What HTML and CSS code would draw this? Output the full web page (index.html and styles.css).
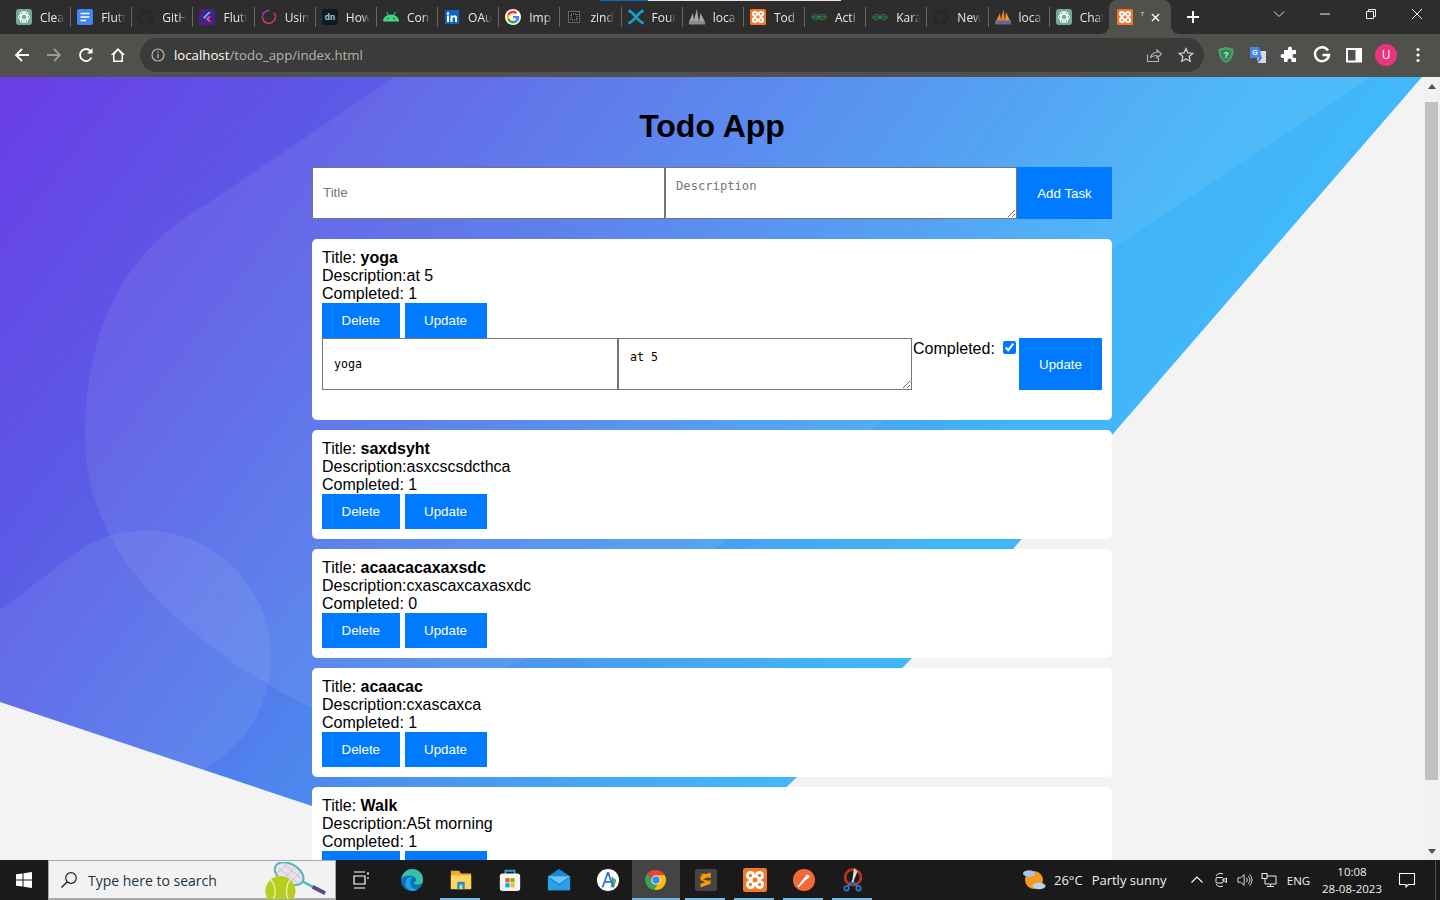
FILE: index.html
```html
<!DOCTYPE html>
<html lang="en">
<head>
<meta charset="utf-8">
<title>Todo App</title>
<link rel="stylesheet" href="styles.css">
</head>
<body>
<svg class="defs" width="0" height="0" aria-hidden="true">
  <symbol id="i-gpt" viewBox="0 0 16 16"><rect width="16" height="16" rx="3" fill="#74aa9c"/><g fill="none" stroke="#fff" stroke-width="1"><ellipse cx="8" cy="8" rx="5.6" ry="2.8"/><ellipse cx="8" cy="8" rx="5.6" ry="2.8" transform="rotate(60 8 8)"/><ellipse cx="8" cy="8" rx="5.6" ry="2.8" transform="rotate(120 8 8)"/></g></symbol>
  <symbol id="i-docs" viewBox="0 0 16 16"><rect width="16" height="16" rx="2" fill="#4285f4"/><path d="M3.5 4.5h9M3.5 8h9M3.5 11.500h5.500" stroke="#fff" stroke-width="1.500"/></symbol>
  <symbol id="i-gh" viewBox="0 0 16 16"><path fill="#24292e" d="M8 0C3.580 0 0 3.580 0 8c0 3.540 2.290 6.530 5.470 7.590.4.070.55-.17.55-.38 0-.19-.01-.82-.01-1.490-2.010.37-2.530-.49-2.690-.94-.09-.23-.48-.94-.82-1.130-.28-.15-.68-.52-.01-.53.63-.01 1.080.58 1.230.82.72 1.210 1.870.87 2.330.66.07-.52.28-.87.51-1.070-1.780-.2-3.640-.89-3.640-3.950 0-.87.31-1.590.82-2.150-.08-.2-.36-1.020.08-2.120 0 0 .67-.21 2.200.82.64-.18 1.320-.27 2-.27.68 0 1.360.09 2 .27 1.530-1.040 2.200-.82 2.200-.82.44 1.100.16 1.920.08 2.120.51.56.82 1.270.82 2.150 0 3.070-1.870 3.750-3.650 3.950.29.25.54.73.54 1.480 0 1.070-.01 1.930-.01 2.200 0 .21.15.46.55.38A8.013 8.013 0 0016 8c0-4.420-3.580-8-8-8z"/></symbol>
  <symbol id="i-flutter" viewBox="0 0 16 16"><rect width="16" height="16" rx="3" fill="#4a1f86"/><path d="M4 8.500 9.500 3H12L5.300 9.800z" fill="#4fd0e6"/><path d="M7 9.800 9.500 7.500H12L9.400 10.100 12 12.800H9.500z" fill="#f0559a"/></symbol>
  <symbol id="i-ring" viewBox="0 0 16 16"><path d="M12.900 3.700A6.500 6.500 0 1 1 1.600 9.500" fill="none" stroke="#e0365f" stroke-width="1.500"/><path d="M1.600 9.500A6.500 6.500 0 0 1 8.500 1.500" fill="none" stroke="#a13cb8" stroke-width="1.500"/></symbol>
  <symbol id="i-dn" viewBox="0 0 16 16"><rect width="16" height="16" rx="2" fill="#0e1a22"/><text x="8" y="11" text-anchor="middle" font-family="Liberation Sans" font-weight="700" font-size="8.500" fill="#a5d3ea">dn</text></symbol>
  <symbol id="i-android" viewBox="0 0 16 16"><path d="M0 12.500a8 7 0 0 1 16 0z" fill="#3ddc84"/><path d="M3.500 3 5.200 6M12.500 3l-1.700 3" stroke="#3ddc84" stroke-width="1"/><circle cx="5" cy="9.500" r=".8" fill="#2e2e2e"/><circle cx="11" cy="9.500" r=".8" fill="#2e2e2e"/></symbol>
  <symbol id="i-in" viewBox="0 0 16 16"><rect x="1" y="1" width="14" height="14" fill="#0a66c2"/><rect x="3" y="6.500" width="2" height="6.500" fill="#fff"/><circle cx="4" cy="4.500" r="1.200" fill="#fff"/><path d="M6.500 6.500h2v1c.5-.8 1.300-1.200 2.200-1.200 1.700 0 2.300 1.100 2.300 2.900V13h-2V9.700c0-.9-.3-1.500-1.100-1.500-.9 0-1.400.6-1.400 1.600V13h-2z" fill="#fff"/></symbol>
  <symbol id="i-g" viewBox="-6 -6 60 60"><circle cx="24" cy="24" r="30" fill="#fff"/><path fill="#EA4335" d="M24 9.500c3.540 0 6.710 1.220 9.210 3.600l6.850-6.850C35.900 2.380 30.470 0 24 0 14.620 0 6.510 5.380 2.560 13.220l7.980 6.190C12.430 13.720 17.740 9.500 24 9.500z"/><path fill="#4285F4" d="M46.980 24.550c0-1.570-.15-3.090-.38-4.550H24v9.020h12.940c-.58 2.960-2.260 5.480-4.780 7.180l7.730 6c4.510-4.180 7.090-10.360 7.090-17.650z"/><path fill="#FBBC05" d="M10.530 28.590c-.48-1.450-.76-2.990-.76-4.590s.27-3.140.76-4.590l-7.980-6.190C.92 16.460 0 20.120 0 24c0 3.880.92 7.540 2.560 10.780l7.970-6.190z"/><path fill="#34A853" d="M24 48c6.480 0 11.930-2.130 15.890-5.810l-7.730-6c-2.150 1.450-4.920 2.300-8.160 2.300-6.260 0-11.570-4.220-13.470-9.910l-7.980 6.190C6.510 42.620 14.620 48 24 48z"/></symbol>
  <symbol id="i-zind" viewBox="0 0 16 16"><rect x="2.500" y="2.500" width="11" height="11" fill="#222" stroke="#aaa" stroke-dasharray="1 1"/><rect x="5" y="5" width="6" height="6" fill="none" stroke="#aaa" stroke-dasharray="1 1"/></symbol>
  <symbol id="i-found" viewBox="0 0 16 16"><path d="M.5 1.500C4 3 6 5.500 8 8s4 5 7.500 6.500M15.500 1.500C12 3 10 5.500 8 8s-4 5-7.500 6.500" fill="none" stroke="#17a3c8" stroke-width="2.800"/></symbol>
  <symbol id="i-pma" viewBox="0 0 16 16"><path d="M0 13 4 4l1 9zM4.500 13 7.800 0 10 13zM10 13l1.500-9L16 13z" fill="#a8a8a8"/><rect y="12" width="16" height="3.500" fill="#8a8a8a"/></symbol>
  <symbol id="i-pma2" viewBox="0 0 16 16"><path d="M1 12 5 4l1 8zM5.500 12 8.500 0 10 12z" fill="#e8842c"/><path d="M10 12l1-9 4 9z" fill="#f09a3e"/><rect y="11.500" width="16" height="4" fill="#5c6a9a"/></symbol>
  <symbol id="i-xampp" viewBox="0 0 16 16"><rect width="16" height="16" rx="1.500" fill="#f6772a"/><g fill="#fff"><circle cx="5" cy="5" r="3"/><circle cx="11" cy="5" r="3"/><circle cx="5" cy="11" r="3"/><circle cx="11" cy="11" r="3"/><rect x="4.500" y="4.500" width="7" height="7"/></g><g fill="#f6772a"><circle cx="5" cy="5" r="1.100"/><circle cx="11" cy="5" r="1.100"/><circle cx="5" cy="11" r="1.100"/><circle cx="11" cy="11" r="1.100"/><rect x="6.500" y="6.500" width="3" height="3"/></g></symbol>
  <symbol id="i-gfg" viewBox="0 0 16 16"><g fill="none" stroke="#2f8d46" stroke-width="1"><path d="M.8 8h14.400"/><path d="M7.600 8c0-1.600-1.300-2.500-3-2.500S1 6.500 1 8s1.400 2.500 3.600 2.500 3-.9 3-2.500zM8.400 8c0-1.600 1.300-2.500 3-2.500S15 6.500 15 8s-1.400 2.500-3.600 2.500-3-.9-3-2.500z"/></g></symbol>
</svg>

<header class="tabstrip">
  <div class="tab"><svg class="ico16"><use href="#i-gpt"/></svg><span class="tab-txt">Clea</span></div>
  <div class="tab"><svg class="ico16"><use href="#i-docs"/></svg><span class="tab-txt">Flutt</span></div>
  <div class="tab"><svg class="ico16"><use href="#i-gh"/></svg><span class="tab-txt">GitH</span></div>
  <div class="tab"><svg class="ico16"><use href="#i-flutter"/></svg><span class="tab-txt">Flutt</span></div>
  <div class="tab"><svg class="ico16"><use href="#i-ring"/></svg><span class="tab-txt">Usin</span></div>
  <div class="tab"><svg class="ico16"><use href="#i-dn"/></svg><span class="tab-txt">How</span></div>
  <div class="tab"><svg class="ico16"><use href="#i-android"/></svg><span class="tab-txt">Con</span></div>
  <div class="tab"><svg class="ico16"><use href="#i-in"/></svg><span class="tab-txt">OAu</span></div>
  <div class="tab"><svg class="ico16"><use href="#i-g"/></svg><span class="tab-txt">Imp</span></div>
  <div class="tab"><svg class="ico16"><use href="#i-zind"/></svg><span class="tab-txt">zind</span></div>
  <div class="tab"><svg class="ico16"><use href="#i-found"/></svg><span class="tab-txt">Four</span></div>
  <div class="tab"><svg class="ico16"><use href="#i-pma"/></svg><span class="tab-txt">loca</span></div>
  <div class="tab"><svg class="ico16"><use href="#i-xampp"/></svg><span class="tab-txt">Tod</span></div>
  <div class="tab"><svg class="ico16"><use href="#i-gfg"/></svg><span class="tab-txt">Acti</span></div>
  <div class="tab"><svg class="ico16"><use href="#i-gfg"/></svg><span class="tab-txt">Kara</span></div>
  <div class="tab"><svg class="ico16"><use href="#i-gh"/></svg><span class="tab-txt">New</span></div>
  <div class="tab"><svg class="ico16"><use href="#i-pma2"/></svg><span class="tab-txt">loca</span></div>
  <div class="tab tab-nosep"><svg class="ico16"><use href="#i-gpt"/></svg><span class="tab-txt">Chat</span></div>
  <div class="tab tab-active"><svg class="ico16"><use href="#i-xampp"/></svg><span class="tab-txt-a">T</span>
    <svg class="tab-x" viewBox="0 0 10 10"><path d="M1 1l8 8M9 1l-8 8" stroke="#fff" stroke-width="1.500"/></svg></div>
  <div class="newtab"><svg class="ico12" viewBox="0 0 12 12"><path d="M6 0v12M0 6h12" stroke="#fff" stroke-width="2"/></svg></div>
  <div class="winctl">
    <div class="winbtn"><svg class="ico12" viewBox="0 0 12 12"><path d="M1 3.500l5 5 5-5" fill="none" stroke="#ddd"/></svg></div>
    <div class="winbtn"><svg class="ico12" viewBox="0 0 12 12"><path d="M1 6h10" stroke="#eee"/></svg></div>
    <div class="winbtn"><svg class="ico12" viewBox="0 0 12 12"><path d="M1.500 3.500h7v7h-7zM3.500 3.500v-2h7v7h-2" fill="none" stroke="#eee"/></svg></div>
    <div class="winbtn"><svg class="ico12" viewBox="0 0 12 12"><path d="M1 1l10 10M11 1L1 11" stroke="#eee"/></svg></div>
  </div>
</header>
<div class="loadline"><span class="load-blue"></span><span class="load-white"></span></div>

<nav class="toolbar">
  <div class="tbtn"><svg class="ico16" viewBox="0 0 16 16"><path d="M15 8H2M8 2 2 8l6 6" fill="none" stroke="#fff" stroke-width="1.800"/></svg></div>
  <div class="tbtn"><svg class="ico16" viewBox="0 0 16 16"><path d="M1 8h13M8 2l6 6-6 6" fill="none" stroke="#999" stroke-width="1.800"/></svg></div>
  <div class="tbtn"><svg class="ico16" viewBox="0 0 16 16"><path d="M13.500 10.500A6 6 0 1 1 12.500 4" fill="none" stroke="#fff" stroke-width="1.800"/><path d="M14.500 1v5.500H9z" fill="#fff"/></svg></div>
  <div class="tbtn"><svg class="ico16" viewBox="0 0 16 16"><path d="M8 1 .8 8H3v7h10V8h2.200zM4.500 7.500 8 3.500l3.500 4v6h-7z" fill="#fff" fill-rule="evenodd"/></svg></div>
  <div class="omnibox">
    <svg class="ico14" viewBox="0 0 14 14"><circle cx="7" cy="7" r="6" fill="none" stroke="#b5b5b5" stroke-width="1.200"/><path d="M7 6v4.200M7 3.600v1.300" stroke="#b5b5b5" stroke-width="1.300"/></svg>
    <span class="url"><span class="url-host">localhost</span>/todo_app/index.html</span>
    <svg class="ico16" viewBox="0 0 16 16"><path d="M1.500 7.500v7h11V11M4.500 11c.5-3.500 3-5.500 6.500-5.500V3l4.500 4-4.500 4V8.500c-2.500 0-5 .5-6.500 2.500z" fill="none" stroke="#b5b5b5" stroke-width="1.100"/></svg>
    <svg class="ico16 omni-star" viewBox="0 0 16 16"><path d="M8 1.500l2 4.400 4.800.5-3.600 3.200 1 4.700L8 12l-4.200 2.300 1-4.700L1.200 6.400 6 5.900z" fill="none" stroke="#d0d0d0" stroke-width="1.300"/></svg>
  </div>
  <div class="tbtn"><svg class="ico16" viewBox="0 0 16 16"><path d="M8 0 15.500 2c0 6-1.500 11-7.500 14C2 13 .5 8 .5 2z" fill="#4fa868"/><path d="M8 2 13.500 3.500c0 5-1.300 8.500-5.500 11-4.200-2.500-5.500-6-5.500-11z" fill="#2e8b57"/><text x="8" y="11" text-anchor="middle" font-family="Liberation Sans" font-size="8.500" font-weight="700" fill="#d8f0e0">?</text></svg></div>
  <div class="tbtn"><svg class="ico16" viewBox="0 0 16 16"><path d="M6 4h10v12H8z" fill="#d5dbe5"/><path d="M0 0h9l3 11H0z" fill="#4a86e8"/><text x="5" y="8" text-anchor="middle" font-family="Liberation Sans" font-size="7" font-weight="700" fill="#fff">G</text><path d="M9 11l-1 5 4-5z" fill="#3568b8"/></svg></div>
  <div class="tbtn"><svg class="ico16" viewBox="0 0 16 16"><path d="M6 1.500a2 2 0 0 1 4 0V3h4v4h-1.500a2 2 0 0 0 0 4H14v4H9.500v-1.500a2 2 0 0 0-4 0V15H2v-4H.5a2 2 0 0 1 0-4H2V3h4z" fill="#fff"/></svg></div>
  <div class="tbtn"><svg class="ico16" viewBox="0 0 16 16"><path d="M14 3.500A7 7 0 1 0 15 8H8.500" fill="none" stroke="#fff" stroke-width="2.400"/></svg></div>
  <div class="tbtn"><svg class="ico16" viewBox="0 0 16 16"><rect x="1" y="2" width="14" height="12.500" fill="none" stroke="#fff" stroke-width="2"/><rect x="9.500" y="2" width="5.500" height="12.500" fill="#fff"/></svg></div>
  <div class="tbtn"><span class="avatar">U</span></div>
  <div class="tbtn"><svg class="ico16" viewBox="0 0 16 16"><circle cx="8" cy="2.500" r="1.600" fill="#fff"/><circle cx="8" cy="8" r="1.600" fill="#fff"/><circle cx="8" cy="13.500" r="1.600" fill="#fff"/></svg></div>
</nav>

<div class="viewport">
  <main class="page">
    <svg class="page-bg" viewBox="0 0 1424 783" aria-hidden="true">
      <defs>
        <linearGradient id="bgrad" gradientUnits="userSpaceOnUse" x1="0" y1="0" x2="1067" y2="800">
          <stop offset="0" stop-color="#6b3de6"/>
          <stop offset=".22" stop-color="#5b5ae6"/>
          <stop offset=".5" stop-color="#4e88ee"/>
          <stop offset=".76" stop-color="#41b5f8"/>
          <stop offset="1" stop-color="#40bdfa"/>
        </linearGradient>
        <clipPath id="bclip"><path d="M0 0H1422L1112 358 1013 472 912 581 797 700 700 793 312 729 0 625z"/></clipPath>
      </defs>
      <path d="M0 0H1422L1112 358 1013 472 912 581 797 700 700 793 312 729 0 625z" fill="url(#bgrad)"/>
      <g clip-path="url(#bclip)" fill="#fff" fill-opacity=".07">
        <path d="M395 0 205 128C130 170 85 245 85 360c0 60 25 115 75 165 50 50 100 80 150 105 130 0 280-60 420-170L1112 172 1370 0z"/>
        <path d="M0 533 85 469A126 126 0 1 1 205 691V800H0z"/>
      </g>
    </svg>
    <div class="container">
      <h1 class="app-title">Todo App</h1>
      <form class="add-form">
        <input class="field field-text" type="text" placeholder="Title">
        <textarea class="field field-area" placeholder="Description"></textarea>
        <button class="btn btn-add" type="button">Add Task</button>
      </form>

      <article class="card">
        <div class="line">Title: <b>yoga</b></div>
        <div class="line">Description:at 5</div>
        <div class="line">Completed: 1</div>
        <div class="actions"><button class="btn" type="button">Delete</button><button class="btn" type="button">Update</button></div>
        <form class="edit-form">
          <input class="field edit-text" type="text" value="yoga">
          <textarea class="field edit-area">at 5</textarea>
          <label class="edit-label">Completed:</label>
          <input class="edit-check" type="checkbox" checked>
          <button class="btn btn-edit" type="button">Update</button>
        </form>
      </article>

      <article class="card">
        <div class="line">Title: <b>saxdsyht</b></div>
        <div class="line">Description:asxcscsdcthca</div>
        <div class="line">Completed: 1</div>
        <div class="actions"><button class="btn" type="button">Delete</button><button class="btn" type="button">Update</button></div>
      </article>

      <article class="card">
        <div class="line">Title: <b>acaacacaxaxsdc</b></div>
        <div class="line">Description:cxascaxcaxasxdc</div>
        <div class="line">Completed: 0</div>
        <div class="actions"><button class="btn" type="button">Delete</button><button class="btn" type="button">Update</button></div>
      </article>

      <article class="card">
        <div class="line">Title: <b>acaacac</b></div>
        <div class="line">Description:cxascaxca</div>
        <div class="line">Completed: 1</div>
        <div class="actions"><button class="btn" type="button">Delete</button><button class="btn" type="button">Update</button></div>
      </article>

      <article class="card">
        <div class="line">Title: <b>Walk</b></div>
        <div class="line">Description:A5t morning</div>
        <div class="line">Completed: 1</div>
        <div class="actions"><button class="btn" type="button">Delete</button><button class="btn" type="button">Update</button></div>
      </article>
    </div>
  </main>
  <aside class="scrollbar">
    <div class="sb-up"><svg class="sb-arrow" viewBox="0 0 8 5"><path d="M4 0l4 5H0z" fill="#505050"/></svg></div>
    <div class="sb-thumb"></div>
    <div class="sb-down"><svg class="sb-arrow" viewBox="0 0 8 5"><path d="M0 0h8L4 5z" fill="#505050"/></svg></div>
  </aside>
</div>

<footer class="taskbar">
  <div class="startbtn"><svg class="ico16" viewBox="0 0 16 16"><path d="M0 2.300 6.500 1.400V7.500H0zM7.500 1.300 16 0v7.500H7.500zM0 8.500h6.500v6.100L0 13.700zM7.500 8.500H16V16L7.500 14.700z" fill="#fff"/></svg></div>
  <div class="searchbox">
    <svg class="ico18" viewBox="0 0 18 18"><circle cx="11" cy="7" r="5.300" fill="none" stroke="#222" stroke-width="1.200"/><path d="M7 11 1.500 16.500" stroke="#222" stroke-width="1.400"/></svg>
    <span class="search-txt">Type here to search</span>
    <svg class="doodle" viewBox="0 0 66 38">
      <ellipse cx="27" cy="12" rx="16" ry="10" transform="rotate(30 27 12)" fill="#e9e2ee" stroke="#4cb8b8" stroke-width="2"/>
      <path d="M16 6 36 22M22 3 41 18M14 14l18 12M18 22 34 4M26 24 40 8M12 14 26 1" stroke="#b9b0c8" stroke-width=".7"/>
      <path d="M41 20 52 26" stroke="#4cb8b8" stroke-width="2.500"/>
      <path d="M51 25.500 64 32" stroke="#5a4a86" stroke-width="4"/>
      <circle cx="18" cy="30" r="15.500" fill="#b6cf1f"/>
      <path d="M8 18c6 7 6 17 1 24M28 18c-5 7-5 17 0 24" fill="none" stroke="#eef2b8" stroke-width="1.300"/>
    </svg>
  </div>
  <div class="tasks">
    <div class="task task-view"><svg class="ico18" viewBox="0 0 18 18"><path d="M2 1h11M2 17h11M2 5h11v8H2z M16 1v3M16 6v2" fill="none" stroke="#fff" stroke-width="1.200"/></svg></div>
    <div class="task"><svg class="ico24" viewBox="0 0 26 26"><circle cx="13" cy="13" r="12" fill="#0f6fb8"/><path d="M1.500 12C3 5 8 1 13 1c7 0 12 5 12 12 0 3-2.500 5-6 5-3 0-4-1-4-2.500 3-.5 3.500-4.500 0-6C10 7 4 8 1.500 12z" fill="#35c2a6"/><path d="M6 17c0-5 4-8 8-7-2 1-3 3-3 6 0 4 3 7 8 7-6 4-13 0-13-6z" fill="#1fa6e0"/></svg></div>
    <div class="task task-open"><svg class="ico24" viewBox="0 0 26 26"><path d="M2 3h9l2 3h11v16H2z" fill="#e6ad2e"/><path d="M2 8h22v15H2z" fill="#fcd462"/><rect x="9" y="15" width="8" height="8" fill="#1f8fd8"/><rect x="11.500" y="18" width="3" height="5" fill="#fcd462"/></svg></div>
    <div class="task"><svg class="ico24" viewBox="0 0 26 26"><path d="M8 7V3h10v4" fill="none" stroke="#29a3d8" stroke-width="2"/><rect x="2" y="6" width="22" height="19" rx="3" fill="#f4f4f4"/><rect x="8" y="11" width="4.500" height="4.500" fill="#f25022"/><rect x="13.500" y="11" width="4.500" height="4.500" fill="#7fba00"/><rect x="8" y="16.500" width="4.500" height="4.500" fill="#00a4ef"/><rect x="13.500" y="16.500" width="4.500" height="4.500" fill="#ffb900"/></svg></div>
    <div class="task"><svg class="ico24" viewBox="0 0 26 26"><path d="M1 9 13 1l12 8v15H1z" fill="#1c86d0"/><path d="M1 9h24L13 17z" fill="#6cc4f4"/><path d="M1 24V10l12 9 12-9v14z" fill="#2aa0e8"/></svg></div>
    <div class="task"><svg class="ico24" viewBox="0 0 26 26"><circle cx="13" cy="13" r="12" fill="#fff"/><path d="M17 9l5 4-2 7-4 1z" fill="#4caf6a"/><path d="M13 5 7 21M13 5l6 16M9 15h8" fill="none" stroke="#2f6fe0" stroke-width="1.800"/><circle cx="13" cy="6" r="1.800" fill="#2f6fe0"/></svg></div>
    <div class="task task-active"><svg class="ico24" viewBox="0 0 48 48"><path fill="#EA4335" d="M24 4a20 20 0 0 1 17.320 10H24a10 10 0 0 0-9.500 6.900L7.500 10.500A20 20 0 0 1 24 4z"/><path fill="#34A853" d="M7.500 10.500 16 25.500a10 10 0 0 0 11 8L20.500 43.700A20 20 0 0 1 7.500 10.500z"/><path fill="#FBBC05" d="M41.320 14A20 20 0 0 1 20.500 43.700L29 29a10 10 0 0 0 1-9 10 10 0 0 0-2-6z"/><circle cx="24" cy="24" r="9.500" fill="#fff"/><circle cx="24" cy="24" r="7.500" fill="#4285F4"/></svg></div>
    <div class="task task-open"><svg class="ico24" viewBox="0 0 26 26"><rect x="1" y="1" width="24" height="24" rx="3" fill="#454545"/><path d="M18 5v4L7 13V9zM18 13v4L7 21v-4zM7 11l11 4-4 1-7-3zM18 11 7 7l4-1 7 3z" fill="#ff9800"/></svg></div>
    <div class="task task-open"><svg class="ico24" viewBox="0 0 16 16"><use href="#i-xampp"/></svg></div>
    <div class="task task-open"><svg class="ico24" viewBox="0 0 26 26"><circle cx="13" cy="13" r="12" fill="#f4693a"/><path d="M6 20l7-9 3-4 3 1 0 2-4 3-8 8z" fill="#fff"/></svg></div>
    <div class="task task-open"><svg class="ico24" viewBox="0 0 26 26"><circle cx="13" cy="10" r="8.500" fill="none" stroke="#b5341a" stroke-width="3"/><path d="M15 1 13 15M17 3 12 16" stroke="#ddd" stroke-width="2"/><path d="M12 15 7 20M13 15l5 5" stroke="#1f7fd0" stroke-width="2"/><circle cx="6" cy="22" r="2.500" fill="none" stroke="#1f7fd0" stroke-width="1.800"/><circle cx="19" cy="22" r="2.500" fill="none" stroke="#1f7fd0" stroke-width="1.800"/></svg></div>
  </div>
  <div class="tray">
    <svg class="weather" viewBox="0 0 24 24"><circle cx="12" cy="12" r="9" fill="#f49a1c"/><ellipse cx="7" cy="5.500" rx="6" ry="3.200" fill="#a8c8e8"/><ellipse cx="17" cy="18" rx="6.500" ry="3.200" fill="#b8d4ec"/></svg>
    <span class="weather-txt"><span class="temp">26°C</span>Partly sunny</span>
    <div class="tray-ico tray-first"><svg class="ico12" viewBox="0 0 12 12"><path d="M.5 8.500 6 3l5.500 5.500" fill="none" stroke="#fff" stroke-width="1.100"/></svg></div>
    <div class="tray-ico"><svg class="ico16" viewBox="0 0 16 16"><path d="M3 4a5 5 0 0 1 7-2M3 12a5 5 0 0 0 7 2" fill="none" stroke="#eee"/><rect x="3" y="5.500" width="7" height="5.500" rx="1" fill="none" stroke="#eee"/><path d="M10 8l3.500-2v4.500z" fill="none" stroke="#eee"/></svg></div>
    <div class="tray-ico"><svg class="ico16" viewBox="0 0 18 16"><path d="M1 5.500h3L8 2v12l-4-3.500H1z" fill="none" stroke="#eee"/><path d="M10.500 5.500a3.500 3.500 0 0 1 0 5M12.500 3.500a6 6 0 0 1 0 9M14.500 2a8.500 8.500 0 0 1 0 12" fill="none" stroke="#eee"/></svg></div>
    <div class="tray-ico"><svg class="ico16" viewBox="0 0 16 16"><path d="M4 4h11v8H4zM9.500 12v2.500M6 14.500h7" fill="none" stroke="#eee"/><rect x="1" y="1.500" width="5" height="5" fill="#1a1a1a" stroke="#eee"/></svg></div>
    <span class="lang">ENG</span>
    <div class="clock"><span>10:08</span><span>28-08-2023</span></div>
    <div class="notify"><svg class="ico16" viewBox="0 0 16 16"><path d="M.5 1.500h15v11H9.500L7 15v-2.500H.5z" fill="none" stroke="#fff" stroke-width="1.100"/></svg></div>
    <span class="show-desk"></span>
  </div>
</footer>
</body>
</html>
```

FILE: styles.css
```css
* { box-sizing: border-box; }
html, body { margin: 0; height: 100%; }
body {
  display: flex;
  flex-direction: column;
  height: 900px;
  overflow: hidden;
  font-family: "Liberation Sans", Arial, sans-serif;
  position: relative;
}
.defs { position: absolute; }
svg { display: block; flex: none; overflow: visible; }
.ico12 { width: 12px; height: 12px; }
.ico14 { width: 14px; height: 14px; }
.ico16 { width: 16px; height: 16px; }
.ico18 { width: 18px; height: 18px; }
.ico24 { width: 24px; height: 24px; }

/* tab strip */
.tabstrip {
  flex: none;
  height: 34px;
  display: flex;
  background: #2d2d2d;
  padding-left: 8px;
  color: #e9e9e9;
  font: 12px "Open Sans", sans-serif;
}
.tab {
  flex: none;
  width: 61.17px;
  display: flex;
  align-items: center;
  gap: 8px;
  padding-left: 8px;
  position: relative;
}
.tab::after {
  content: "";
  position: absolute;
  right: -2px;
  top: 7px;
  height: 20px;
  width: 1px;
  background: #686868;
}
.tab-nosep::after { display: none; }
.tab-txt {
  flex: none;
  width: 24px;
  white-space: nowrap;
  -webkit-mask-image: linear-gradient(90deg, #000 65%, transparent);
  mask-image: linear-gradient(90deg, #000 65%, transparent);
}
.tab-active {
  background: #50514d;
  border-radius: 8px 8px 0 0;
  width: 62px;
}
.tab-active::before,
.tab-active::after {
  content: "";
  display: block;
  position: absolute;
  top: auto;
  bottom: 0;
  width: 8px;
  height: 8px;
}
.tab-active::before {
  left: -8px;
  background: radial-gradient(circle at 0 0, transparent 7.5px, #50514d 8px);
}
.tab-active::after {
  right: -8px;
  background: radial-gradient(circle at 100% 0, transparent 7.5px, #50514d 8px);
}
.tab-txt-a { width: 6px; font-size: 6px; height: 14px; }
.tab-x { width: 9px; height: 9px; margin-left: -4px; }
.newtab {
  flex: none;
  width: 44px;
  display: flex;
  align-items: center;
  justify-content: center;
}
.winctl { margin-left: auto; display: flex; }
.winbtn {
  width: 46px;
  height: 28px;
  display: flex;
  align-items: center;
  justify-content: center;
}
.loadline { position: absolute; top: 0; left: 600px; display: flex; height: 1px; }
.load-blue { width: 48px; background: #0a6cc4; }
.load-white { width: 193px; background: #e6e6e6; }

/* toolbar */
.toolbar {
  flex: none;
  height: 43px;
  display: flex;
  align-items: center;
  background: #50514d;
  padding: 0 6px 1px;
}
.tbtn {
  flex: none;
  width: 32px;
  display: flex;
  justify-content: center;
  align-items: center;
}
.omnibox {
  flex: 1;
  height: 34px;
  margin: 0 6px;
  padding: 0 10px 0 11px;
  display: flex;
  align-items: center;
  background: #3b3b3a;
  border-radius: 17px;
}
.url {
  margin-left: 9px;
  font: 13.23px "Open Sans", sans-serif;
  color: #b4b4b4;
  flex: 1;
}
.url-host { color: #fff; }
.omni-star { margin-left: 16px; }
.avatar {
  width: 22px;
  height: 22px;
  border-radius: 50%;
  background: #e8357e;
  color: #fff;
  font: 12px/22px "Open Sans", sans-serif;
  text-align: center;
}

/* page */
.viewport { flex: none; height: 783px; display: flex; background: #f3f3f3; }
.page { flex: none; width: 1424px; height: 783px; overflow: hidden; position: relative; }
.page-bg { position: absolute; left: 0; top: 0; width: 1424px; height: 783px; }
.container { position: relative; width: 800px; margin: 0 auto; }
.app-title {
  margin: 31px 0 22px;
  font-size: 32px;
  line-height: 37px;
  font-weight: 700;
  text-align: center;
  color: #000;
}
.add-form { display: flex; margin-bottom: 20px; height: 52px; }
.field {
  border: 1px solid #767676;
  background: #fff;
  padding: 10px;
  margin: 0;
  height: 52px;
  border-radius: 0;
  outline: none;
}
.field-text { width: 353px; padding: 9px 10px 11px; font: 13.33px "Liberation Sans", sans-serif; }
.field-area { width: 352px; font: 12.17px/17px "DejaVu Sans Mono", monospace; }
.edit-text { width: 296px; padding-left: 11px; font: 11.63px "DejaVu Sans Mono", monospace; color: #000; }
.edit-area { width: 294px; padding-left: 11px; font: 11.63px/17px "DejaVu Sans Mono", monospace; color: #000; }
.btn {
  flex: none;
  border: none;
  border-radius: 0;
  background: #007bff;
  color: #fff;
  font: 13.33px "Liberation Sans", sans-serif;
  padding: 0 19.5px;
  height: 35px;
  white-space: nowrap;
}
.btn-add { width: 95px; height: 52px; padding: 0; }
.card {
  background: #fff;
  border-radius: 5px;
  padding: 10px;
  margin-bottom: 10px;
  font-size: 16px;
  line-height: 18px;
  color: #000;
}
.actions { display: flex; gap: 5px; }
.edit-form {
  display: flex;
  align-items: flex-start;
  margin-bottom: 20px;
  height: 52px;
}
.edit-label { margin: 2px 0 0 1px; width: 80px; flex: none; }
.edit-check { flex: none; width: 13px; height: 13px; margin: 3px 0 0 10px; }
.btn-edit { width: 83px; height: 52px; margin-left: auto; padding: 0; }

/* scrollbar */
.scrollbar { flex: none; width: 16px; display: flex; flex-direction: column; background: #f1f1f1; }
.sb-up { height: 25px; display: flex; justify-content: center; padding-top: 7px; }
.sb-thumb { height: 678px; margin: 0 2px 0 1px; background: #c1c1c1; }
.sb-down { margin-top: auto; height: 17px; display: flex; justify-content: center; padding-top: 6px; }
.sb-arrow { width: 8px; height: 5px; }

/* taskbar */
.taskbar {
  flex: none;
  height: 40px;
  display: flex;
  align-items: center;
  background: #1a1a1a;
  color: #fff;
  font-family: "Open Sans", sans-serif;
}
.startbtn { flex: none; width: 48px; display: flex; justify-content: center; }
.searchbox {
  flex: none;
  width: 288px;
  height: 40px;
  display: flex;
  align-items: center;
  background: #f2f2f2;
  border: 1px solid #a8a8a8;
  border-bottom-width: 2px;
  padding-left: 11px;
  position: relative;
}
.search-txt { margin-left: 10px; padding-top: 2px; font-size: 14px; color: #1c3346; }
.doodle { position: absolute; left: 213px; top: 1px; width: 66px; height: 37px; overflow: hidden; }
.tasks { flex: none; display: flex; margin-left: 2px; height: 40px; }
.task {
  flex: none;
  width: 49px;
  display: flex;
  align-items: center;
  justify-content: center;
  position: relative;
}
.task-view { padding-right: 4px; }
.task-open::after, .task-active::after {
  content: "";
  position: absolute;
  bottom: 0;
  left: 4px;
  width: 40px;
  height: 2px;
  background: #76b9ed;
}
.task-active { background: #444; width: 48px; margin-right: 1px; }
.task-active::after { left: 0; width: 48px; }
.tray { margin-left: auto; flex: none; width: 418px; display: flex; align-items: center; font-size: 13px; color: #f0f0f0; }
.weather { width: 24px; height: 24px; margin-right: 8px; }
.weather-txt { flex: none; width: 113px; white-space: nowrap; }
.temp { margin-right: 9px; }
.tray-ico { flex: none; width: 24px; display: flex; justify-content: center; }
.tray-first { margin-left: 18px; }
.lang { flex: none; width: 35px; text-align: center; font-size: 11.5px; }
.clock { flex: none; width: 72px; display: flex; flex-direction: column; align-items: center; font-size: 11.5px; line-height: 17px; }
.notify { flex: none; width: 38px; display: flex; justify-content: center; }
.show-desk { flex: none; width: 1px; height: 40px; margin-left: 9px; background: #555; }
```
